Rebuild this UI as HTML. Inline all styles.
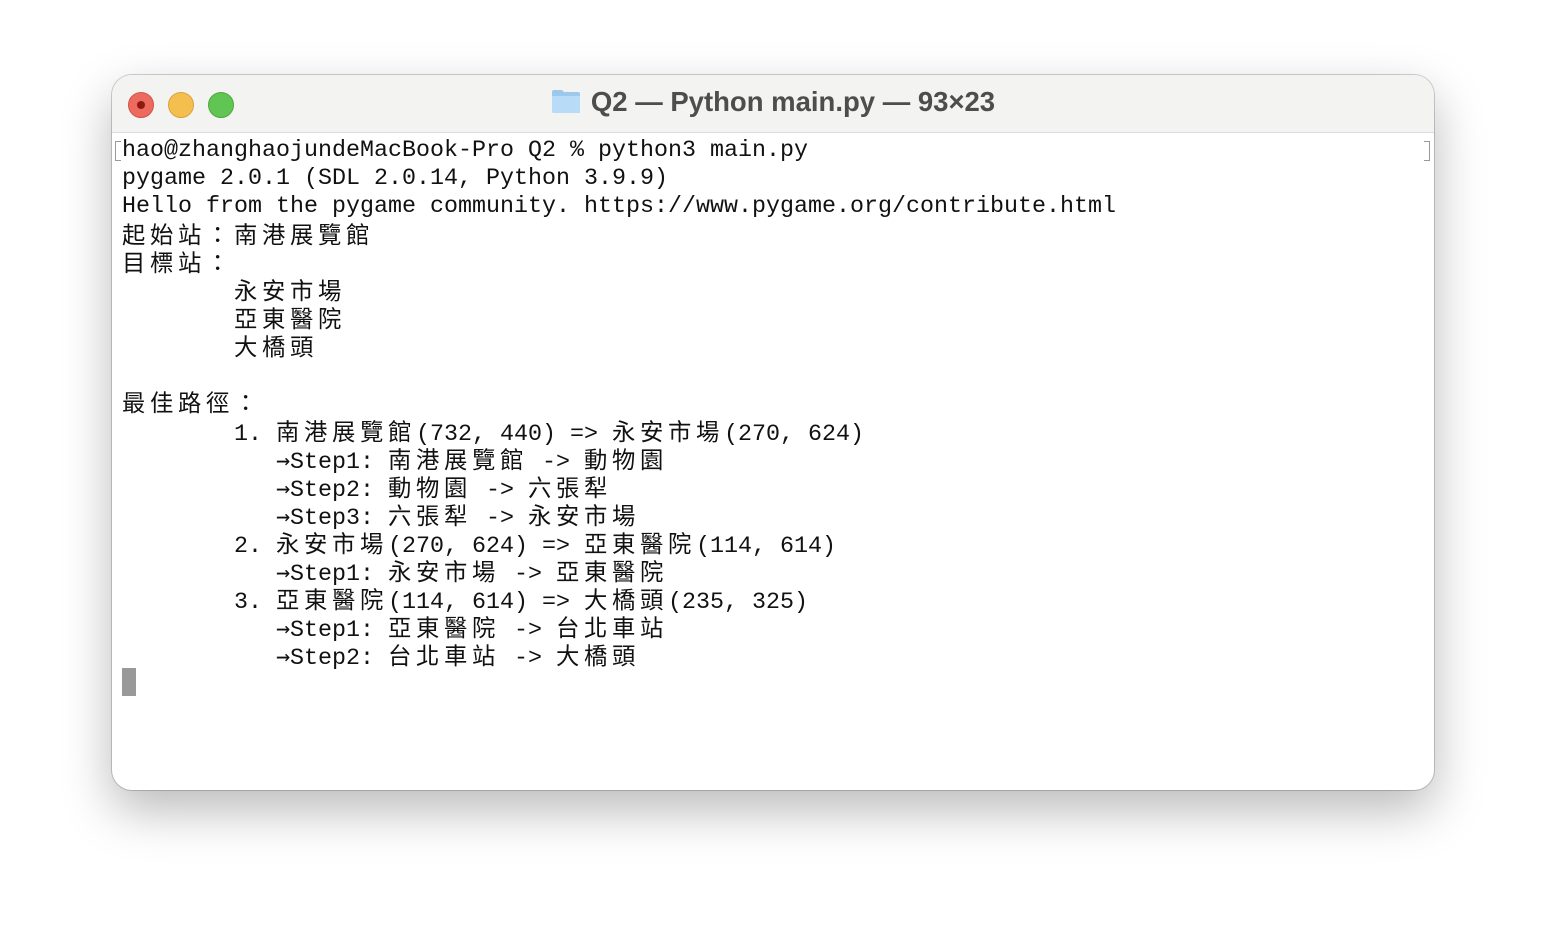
<!DOCTYPE html>
<html><head><meta charset="utf-8"><style>
html,body{margin:0;padding:0;width:1546px;height:938px;background:#fff;overflow:hidden}
.win{position:absolute;left:112px;top:75px;width:1322px;height:715px;border-radius:20px;background:#fff;box-shadow:0 20px 50px rgba(0,0,0,0.28),0 0 0 1px rgba(0,0,0,0.18);overflow:hidden}
.tb{position:absolute;left:0;top:0;width:100%;height:57px;background:#f3f3f2;border-bottom:1px solid #dcdcdc}
.dot{position:absolute;top:17px;width:24px;height:24px;border-radius:50%}
.title{position:absolute;left:0;width:100%;top:11px;text-align:center;font:bold 27.5px "Liberation Sans",sans-serif;color:#4d4d4d}
.l{position:absolute;white-space:pre;font:23.33px/28px "Liberation Mono",monospace;color:#111}
.c{font-family:"Noto Sans CJK TC",sans-serif;letter-spacing:4.67px;font-size:23.33px}
.a{font-family:"DejaVu Sans Mono",monospace;font-size:23.33px}
</style></head><body>
<div class="win">
<div class="tb">
<div class="dot" style="left:16px;background:#ed6a5e;border:1px solid #d05548"><div style="position:absolute;left:8px;top:8px;width:8px;height:8px;border-radius:50%;background:#8c1a10"></div></div>
<div class="dot" style="left:56px;background:#f5bf4f;border:1px solid #d8a33d"></div>
<div class="dot" style="left:96px;background:#61c554;border:1px solid #4ea83f"></div>
<div class="title"><svg width="30" height="26" viewBox="0 0 30 26" style="vertical-align:-3px;margin-right:10px"><path d="M1 4 Q1 2 3 2 H11 L13 4 H27 Q29 4 29 6 V24 Q29 25 27 25 H3 Q1 25 1 23Z" fill="#9cc8ec"/><path d="M1 8 H29 V23 Q29 25 27 25 H3 Q1 25 1 23Z" fill="#b8dcf7"/></svg>Q2 — Python main.py — 93×23</div>
</div>
</div>
<div style="position:absolute;left:115px;top:141px;width:5px;height:18px;border:1.5px solid #999;border-right:none"></div>
<div style="position:absolute;left:1424px;top:141px;width:5px;height:18px;border:1.5px solid #999;border-left:none"></div>
<div class="l" style="left:122px;top:137px">hao@zhanghaojundeMacBook-Pro Q2 % python3 main.py</div>
<div class="l" style="left:122px;top:165px">pygame 2.0.1 (SDL 2.0.14, Python 3.9.9)</div>
<div class="l" style="left:122px;top:193px">Hello from the pygame community. https://www.pygame.org/contribute.html</div>
<div class="l" style="left:122px;top:219px"><span class="c">起始站：南港展覽館</span></div>
<div class="l" style="left:122px;top:247px"><span class="c">目標站：</span></div>
<div class="l" style="left:234px;top:275px"><span class="c">永安市場</span></div>
<div class="l" style="left:234px;top:303px"><span class="c">亞東醫院</span></div>
<div class="l" style="left:234px;top:331px"><span class="c">大橋頭</span></div>
<div class="l" style="left:122px;top:387px"><span class="c">最佳路徑：</span></div>
<div class="l" style="left:234px;top:416px">1. <span class="c">南港展覽館</span>(732, 440) =&gt; <span class="c">永安市場</span>(270, 624)</div>
<div class="l" style="left:276px;top:444px"><span class="a">→</span>Step1: <span class="c">南港展覽館</span> -&gt; <span class="c">動物園</span></div>
<div class="l" style="left:276px;top:472px"><span class="a">→</span>Step2: <span class="c">動物園</span> -&gt; <span class="c">六張犁</span></div>
<div class="l" style="left:276px;top:500px"><span class="a">→</span>Step3: <span class="c">六張犁</span> -&gt; <span class="c">永安市場</span></div>
<div class="l" style="left:234px;top:528px">2. <span class="c">永安市場</span>(270, 624) =&gt; <span class="c">亞東醫院</span>(114, 614)</div>
<div class="l" style="left:276px;top:556px"><span class="a">→</span>Step1: <span class="c">永安市場</span> -&gt; <span class="c">亞東醫院</span></div>
<div class="l" style="left:234px;top:584px">3. <span class="c">亞東醫院</span>(114, 614) =&gt; <span class="c">大橋頭</span>(235, 325)</div>
<div class="l" style="left:276px;top:612px"><span class="a">→</span>Step1: <span class="c">亞東醫院</span> -&gt; <span class="c">台北車站</span></div>
<div class="l" style="left:276px;top:640px"><span class="a">→</span>Step2: <span class="c">台北車站</span> -&gt; <span class="c">大橋頭</span></div>
<div style="position:absolute;left:122px;top:668px;width:14px;height:28px;background:#999"></div>
</body></html>
